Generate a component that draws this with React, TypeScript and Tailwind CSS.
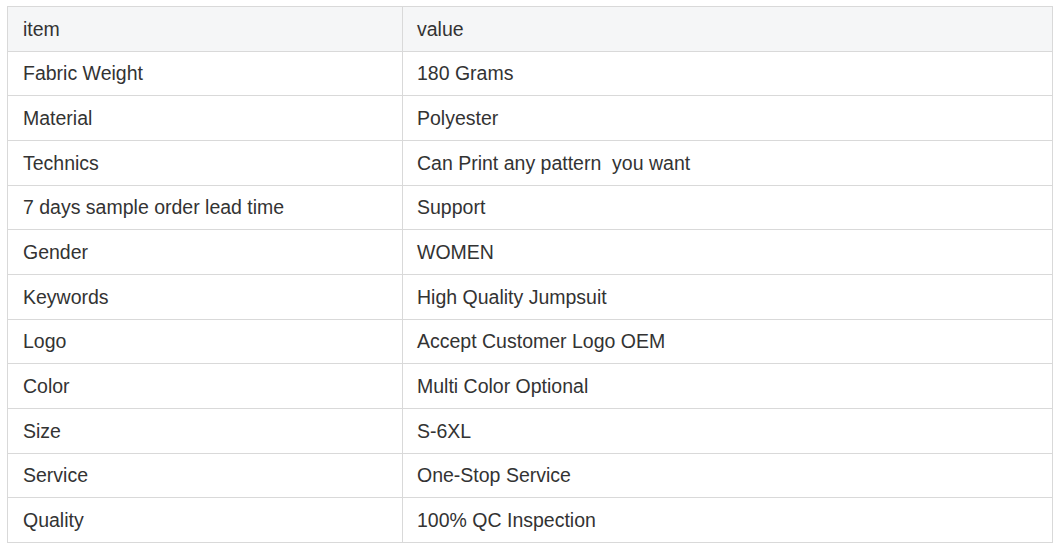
const rows: [string, string][] = [
  ["Fabric Weight", "180 Grams"],
  ["Material", "Polyester"],
  ["Technics", "Can Print any pattern\u00a0 you want"],
  ["7 days sample order lead time", "Support"],
  ["Gender", "WOMEN"],
  ["Keywords", "High Quality Jumpsuit"],
  ["Logo", "Accept Customer Logo OEM"],
  ["Color", "Multi Color Optional"],
  ["Size", "S-6XL"],
  ["Service", "One-Stop Service"],
  ["Quality", "100% QC Inspection"],
];

export default function App() {
  return (
    <div className="bg-white w-[1060px] h-[549px] pt-[6px] pl-[7px] font-['Liberation_Sans',Arial,sans-serif] text-[19.5px] text-[#333]">
      <table className="w-[1046px] border-collapse table-fixed">
        <colgroup>
          <col className="w-[395px]" />
          <col />
        </colgroup>
        <tbody>
          <tr className="bg-[#f5f6f7] h-[44.67px]">
            <td className="border border-[#d9d9d9] px-[15px] pt-[1px] pb-0 align-middle">item</td>
            <td className="border border-[#d9d9d9] px-[14px] pt-[1px] pb-0 align-middle">value</td>
          </tr>
          {rows.map(([k, v]) => (
            <tr key={k} className="h-[44.67px]">
              <td className="border border-[#d9d9d9] px-[15px] pt-[1px] pb-0 align-middle">{k}</td>
              <td className="border border-[#d9d9d9] px-[14px] pt-[1px] pb-0 align-middle">{v}</td>
            </tr>
          ))}
        </tbody>
      </table>
    </div>
  );
}
